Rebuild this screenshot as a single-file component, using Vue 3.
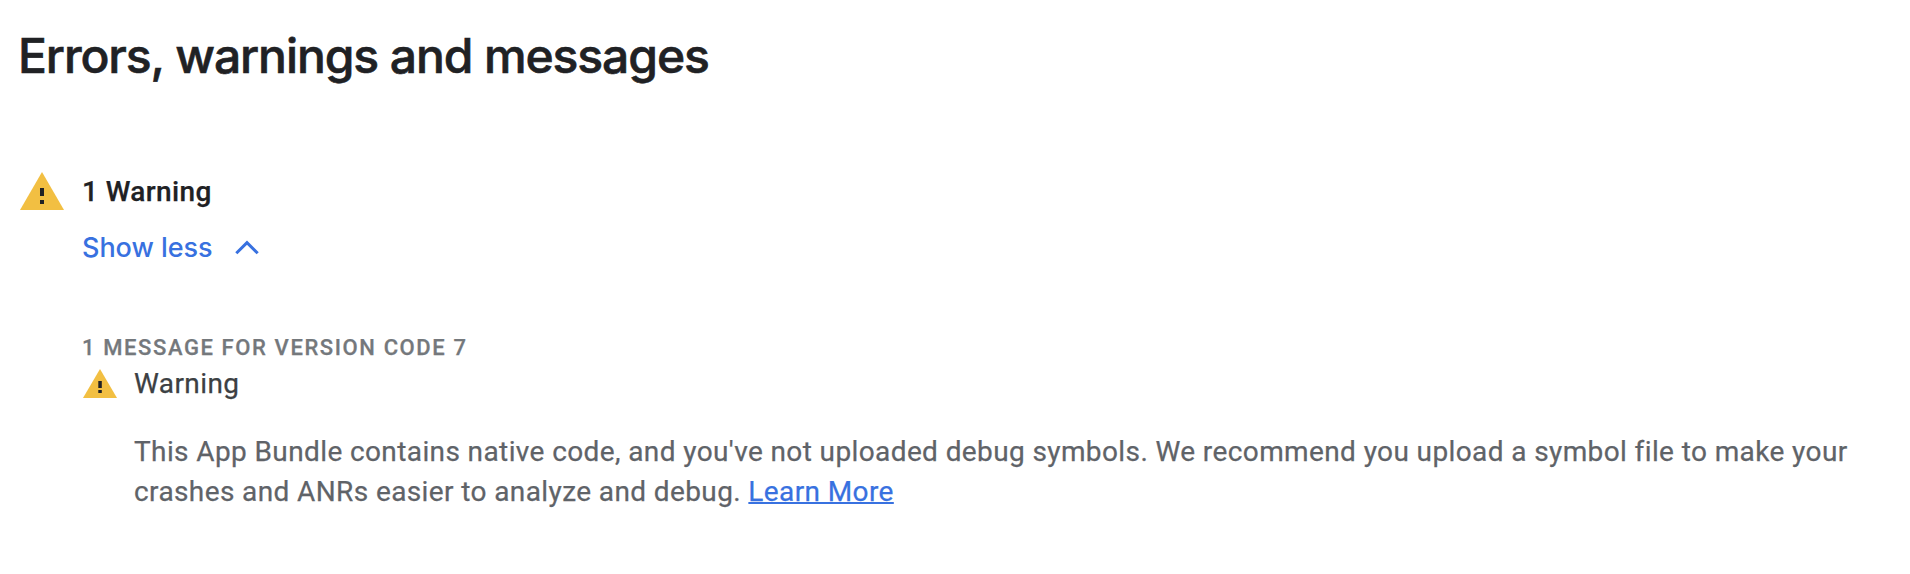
<script setup>
</script>

<template>
  <main class="page">
    <h1>Errors, warnings and messages</h1>
    <section class="summary">
      <svg class="icon-lg" viewBox="0 0 44 38"><path d="M22 0 44 38H0z" fill="#f2bf42"/><path d="M20 16h4v8h-4zM20 28h4v4h-4z" fill="#202124"/></svg>
      <div class="content">
        <h2>1 Warning</h2>
        <a class="toggle"><span>Show less</span><svg class="chevron" viewBox="0 0 24 15"><path d="M1.300 13.300 12 2.600l10.700 10.700" fill="none" stroke="#3871e0" stroke-width="3"/></svg></a>
        <h3>1 MESSAGE FOR VERSION CODE 7</h3>
        <div class="row">
          <svg class="icon-sm" viewBox="0 0 34 29"><path d="M17 0 34 29H0z" fill="#f2bf42"/><path d="M15.300 12h3.500v7h-3.500zM15.300 21h3.500v3h-3.500z" fill="#202124"/></svg>
          <span>Warning</span>
        </div>
        <p>This App Bundle contains native code, and you've not uploaded debug symbols. We recommend you upload a symbol file to make your<br>crashes and ANRs easier to analyze and debug. <a>Learn More</a></p>
      </div>
    </section>
  </main>
</template>

<style>
body { background: #fff; }
</style>
<style scoped>
.page { height: 574px; box-sizing: border-box; padding: 24px 0 0 20px; font-family: Roboto, sans-serif; color: #202124; overflow: hidden; -webkit-text-stroke: .25px currentColor; }
h1, h2, h3, p { margin: 0; }
h1 { margin-left: -2px; font: 500 48px/64px Inter, sans-serif; letter-spacing: -1.1px; white-space: nowrap; -webkit-text-stroke-width: .6px; }
.summary { display: flex; margin-top: 84px; }
.icon-lg { width: 44px; height: 38px; flex: none; }
.content { margin-left: 18px; padding-top: 1px; }
h2 { font-size: 28px; line-height: 38px; font-weight: 500; letter-spacing: .4px; }
.toggle { display: flex; align-items: center; height: 40px; margin-top: 17px; color: #3871e0; font: 500 27px/40px Inter, sans-serif; letter-spacing: -.05px; -webkit-text-stroke-width: 0; }
.toggle span { width: 131px; white-space: nowrap; }
.chevron { width: 24px; height: 15px; margin: 0 0 2px 22px; }
h3 { margin-top: 64px; font-size: 22px; line-height: 32px; font-weight: 500; letter-spacing: 1.6px; color: #74787c; }
.row { display: flex; align-items: center; height: 38px; font-size: 28px; color: #3c4043; letter-spacing: .4px; }
.icon-sm { width: 34px; height: 29px; margin: 0 17px 0 1px; }
p { margin: 30px 0 0 52px; font-size: 28px; line-height: 40px; color: #5f6368; white-space: nowrap; letter-spacing: .39px; }
p a { color: #3871e0; text-decoration: underline; text-decoration-thickness: 2px; }
</style>
